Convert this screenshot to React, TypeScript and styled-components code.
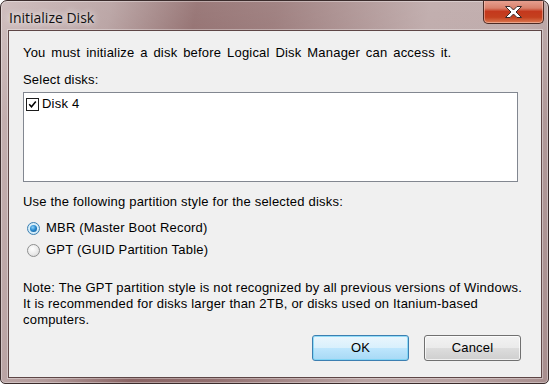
import React from "react";
import styled, { createGlobalStyle } from "styled-components";

const Global = createGlobalStyle`
  html, body { margin: 0; padding: 0; background: #ffffff; }
  body { font-family: "Liberation Sans", Arial, sans-serif; }
`;

const Frame = styled.div`
  box-sizing: border-box;
  width: 549px;
  height: 384px;
  border: 1px solid #3b2c2c;
  border-radius: 7px 7px 5px 5px;
  background:
    linear-gradient(180deg, rgba(255,255,255,0.15) 0px, rgba(255,255,255,0) 120px),
    linear-gradient(100deg, #c8b4b4 0%, #b29a9a 18%, #8a6464 32%, #926f6f 45%, #b9a3a3 70%, #b8a2a2 85%, #a88e8e 100%);
  display: flex;
  flex-direction: column;
  overflow: hidden;
  box-shadow: inset 0 0 0 1px rgba(255,255,255,0.35);
`;

const TitleBar = styled.div`
  height: 29px;
  display: flex;
  align-items: flex-start;
  justify-content: space-between;
  padding-left: 8px;
`;

const Title = styled.div`
  font-family: "Open Sans", "Noto Sans", sans-serif;
  font-size: 14px;
  color: #111;
  margin-top: 7px;
  text-shadow: 0 0 6px rgba(255,255,255,0.9), 0 0 10px rgba(255,255,255,0.7);
`;

const CloseButton = styled.div`
  box-sizing: border-box;
  width: 61px;
  height: 24px;
  margin-top: -1px;
  margin-right: 4px;
  border: 1px solid #4b2a24;
  border-top: none;
  border-radius: 0 0 5px 5px;
  background: linear-gradient(180deg, #e8a394 0%, #d9816c 35%, #c4381d 50%, #c4401f 75%, #dc7a52 100%);
  box-shadow: inset 0 0 0 1px rgba(255,220,210,0.45);
  display: flex;
  align-items: center;
  justify-content: center;
`;

const Client = styled.div`
  box-sizing: border-box;
  flex: 1;
  margin: 0 6px 5px 7px;
  border: 1px solid #5e4646;
  background: #f0f0f0;
  padding: 14px 23px 0 14px;
  display: flex;
  flex-direction: column;
  font-size: 13px;
  line-height: 16px;
  letter-spacing: 0.2px;
  color: #000;
  box-shadow: 0 0 0 1px rgba(255,255,255,0.35);
`;

const Text = styled.div<{ $mt?: number; $wide?: boolean }>`
  margin-top: ${(p) => p.$mt ?? 0}px;
  white-space: nowrap;
  word-spacing: ${(p) => (p.$wide ? "2px" : "normal")};
`;

const ListBox = styled.div`
  box-sizing: border-box;
  height: 90px;
  margin-top: 4px;
  border: 1px solid #828790;
  background: #fff;
  padding: 3px 2px;
`;

const ListItem = styled.label`
  display: flex;
  align-items: center;
  gap: 3px;
  height: 16px;
`;

const CheckBox = styled.span`
  box-sizing: border-box;
  width: 13px;
  height: 13px;
  border: 1px solid #1c1c1c;
  background: #fff;
  display: inline-flex;
  align-items: center;
  justify-content: center;
`;

const RadioGroup = styled.div`
  display: flex;
  flex-direction: column;
  gap: 2px;
  margin-top: 8px;
  padding-left: 4px;
`;

const RadioRow = styled.label`
  display: flex;
  align-items: center;
  gap: 6px;
  height: 20px;
`;

const Radio = styled.span<{ $on?: boolean }>`
  box-sizing: border-box;
  width: 13px;
  height: 13px;
  border-radius: 50%;
  border: 1px solid ${(p) => (p.$on ? "#3c7fb1" : "#8e8f8f")};
  background: ${(p) =>
    p.$on
      ? "radial-gradient(circle at 50% 45%, #e9f6fd 0%, #d3ecf9 60%, #b7dbf0 100%)"
      : "radial-gradient(circle at 40% 35%, #ffffff 0%, #eaeaea 55%, #cfcfcf 100%)"};
  display: inline-flex;
  align-items: center;
  justify-content: center;
`;

const RadioDot = styled.span`
  width: 7px;
  height: 7px;
  border-radius: 50%;
  background: radial-gradient(circle at 40% 35%, #8fd3f7 0%, #2b8bd0 45%, #0c4f8a 100%);
`;

const Note = styled.div`
  margin-top: 20px;
  white-space: nowrap;
`;

const ButtonRow = styled.div`
  display: flex;
  justify-content: flex-end;
  gap: 15px;
  margin-top: 7px;
  margin-right: -3px;
`;

const Button = styled.div<{ $default?: boolean }>`
  box-sizing: border-box;
  width: 97px;
  height: 26px;
  border-radius: 3px;
  border: 1px solid ${(p) => (p.$default ? "#3c7fb1" : "#707070")};
  background: ${(p) =>
    p.$default
      ? "linear-gradient(180deg, #eaf6fd 0%, #d9f0fc 49%, #bee6fd 50%, #a7d9f5 100%)"
      : "linear-gradient(180deg, #f2f2f2 0%, #ebebeb 49%, #dddddd 50%, #cfcfcf 100%)"};
  box-shadow: inset 0 0 0 1px ${(p) => (p.$default ? "rgba(110,210,245,0.7)" : "rgba(255,255,255,0.7)")};
  display: flex;
  align-items: center;
  justify-content: center;
  color: #000;
`;

export default function App() {
  return (
    <>
      <Global />
      <Frame>
        <TitleBar>
          <Title>Initialize Disk</Title>
          <CloseButton>
            <svg width="19" height="14" viewBox="0 0 19 14">
              <path
                d="M1.5 1.5 L6 1.5 L9.5 5 L13 1.5 L17.5 1.5 L12 7 L17.5 12.5 L13 12.5 L9.5 9 L6 12.5 L1.5 12.5 L7 7 Z"
                fill="#ffffff"
                stroke="#3a2a2a"
                strokeWidth="1"
                strokeLinejoin="round"
              />
            </svg>
          </CloseButton>
        </TitleBar>
        <Client>
          <Text $wide>You must initialize a disk before Logical Disk Manager can access it.</Text>
          <Text $mt={11}>Select disks:</Text>
          <ListBox>
            <ListItem>
              <CheckBox>
                <svg width="9" height="9" viewBox="0 0 9 9">
                  <path d="M1.2 4.2 L3.5 6.8 L7.8 1.6" fill="none" stroke="#000" strokeWidth="1.5" />
                </svg>
              </CheckBox>
              Disk 4
            </ListItem>
          </ListBox>
          <Text $mt={12}>Use the following partition style for the selected disks:</Text>
          <RadioGroup>
            <RadioRow>
              <Radio $on>
                <RadioDot />
              </Radio>
              MBR (Master Boot Record)
            </RadioRow>
            <RadioRow>
              <Radio />
              GPT (GUID Partition Table)
            </RadioRow>
          </RadioGroup>
          <Note>
            Note: The GPT partition style is not recognized by all previous versions of Windows.
            <br />
            It is recommended for disks larger than 2TB, or disks used on Itanium-based
            <br />
            computers.
          </Note>
          <ButtonRow>
            <Button $default>OK</Button>
            <Button>Cancel</Button>
          </ButtonRow>
        </Client>
      </Frame>
    </>
  );
}
